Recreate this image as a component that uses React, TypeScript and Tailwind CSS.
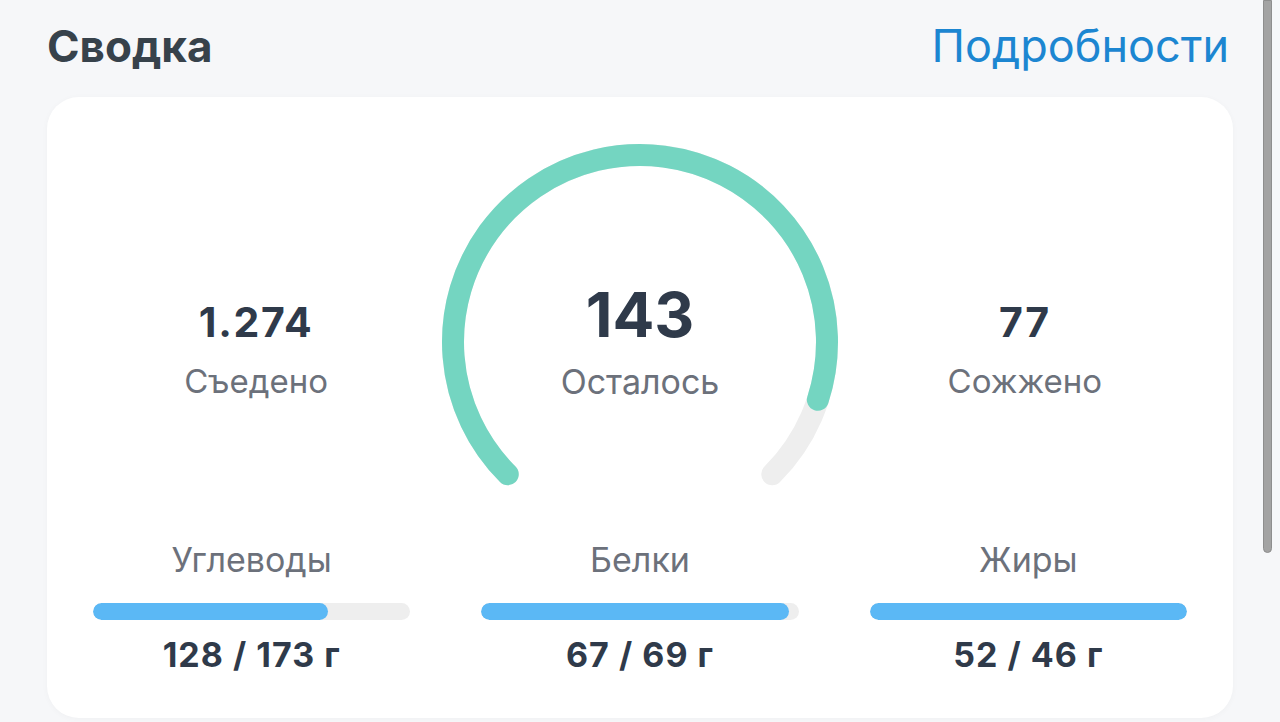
import React from "react";

type Macro = {
  label: string;
  eaten: number;
  goal: number;
};

const macros: Macro[] = [
  { label: "Углеводы", eaten: 128, goal: 173 },
  { label: "Белки", eaten: 67, goal: 69 },
  { label: "Жиры", eaten: 52, goal: 46 },
];

const font = { fontFamily: "Inter, 'Noto Sans', sans-serif" };

// point on the gauge circle; angle in degrees, 0 = right, counter-clockwise positive
function polar(cx: number, cy: number, r: number, deg: number) {
  const rad = (deg * Math.PI) / 180;
  return { x: cx + r * Math.cos(rad), y: cy - r * Math.sin(rad) };
}

function arcPath(cx: number, cy: number, r: number, from: number, sweep: number) {
  const a = polar(cx, cy, r, from);
  const b = polar(cx, cy, r, from - sweep);
  const large = sweep > 180 ? 1 : 0;
  return `M ${a.x} ${a.y} A ${r} ${r} 0 ${large} 1 ${b.x} ${b.y}`;
}

function Gauge({ progress }: { progress: number }) {
  const cx = 200;
  const cy = 200;
  const r = 187;
  const total = 270;
  return (
    <svg className="absolute inset-0" width={400} height={345} viewBox="0 0 400 345">
      <path d={arcPath(cx, cy, r, 225, total)} fill="none" stroke="#eeeeee" strokeWidth={22} strokeLinecap="round" />
      <path
        d={arcPath(cx, cy, r, 225, total * progress)}
        fill="none"
        stroke="#74d5c1"
        strokeWidth={22}
        strokeLinecap="round"
      />
    </svg>
  );
}

function Stat({ value, label, className }: { value: string; label: string; className?: string }) {
  return (
    <div className={`flex flex-col items-center pt-[156px] ${className ?? ""}`}>
      <div className="text-[41px] leading-[48px] font-bold tracking-[0.04em] text-[#2f3a4a]">{value}</div>
      <div className="mt-[15px] text-[33px] leading-[40px] text-[#6c717b]">{label}</div>
    </div>
  );
}

function MacroBar({ label, eaten, goal }: Macro) {
  const pct = Math.min(eaten / goal, 1) * 100;
  return (
    <div className="flex flex-col items-center">
      <div className="text-[34px] leading-[40px] text-[#6c717b]">{label}</div>
      <div className="mt-[23px] h-[17px] w-full rounded-full bg-[#eeeeee] overflow-hidden">
        <div className="h-full rounded-full bg-[#5bb8f5]" style={{ width: `${pct}%` }} />
      </div>
      <div className="mt-[15px] text-[34px] leading-[40px] font-bold tracking-[0.03em] text-[#2f3a4a]">
        {eaten} / {goal} г
      </div>
    </div>
  );
}

export default function App() {
  return (
    <div className="relative min-h-screen bg-[#f6f7f9] px-[47px] pt-[18px] pb-[4px]" style={font}>
      <div className="flex items-center justify-between pr-[4px]">
        <h1 className="text-[44px] leading-[56px] font-bold text-[#37424b]">Сводка</h1>
        <a className="text-[45px] leading-[56px] text-[#1c86d1]">Подробности</a>
      </div>

      <div className="mt-[23px] rounded-[32px] bg-white px-[46px] pt-[45px] pb-[43px] shadow-[0_1px_6px_rgba(0,0,0,0.03)]">
        <div className="grid grid-cols-3 gap-x-[71px]">
          <Stat value="1.274" label="Съедено" className="pl-[9px]" />
          <div className="flex justify-center">
            <div className="relative h-[345px] w-[400px] shrink-0">
              <Gauge progress={0.9} />
              <div className="relative flex flex-col items-center pt-[142px]">
                <div className="text-[62px] leading-[62px] font-bold text-[#2f3a4a]">143</div>
                <div className="mt-[16px] text-[34px] leading-[40px] text-[#6c717b]">Осталось</div>
              </div>
            </div>
          </div>
          <Stat value="77" label="Сожжено" className="pr-[7px]" />
        </div>

        <div className="mt-[53px] grid grid-cols-3 gap-x-[71px]">
          {macros.map((m) => (
            <MacroBar key={m.label} {...m} />
          ))}
        </div>
      </div>

      {/* overlay scrollbar */}
      <div className="absolute right-[8px] top-0 h-[553px] w-[9px] rounded-b-full border border-[#8e8e8e] bg-[#a3a3a3]" />
    </div>
  );
}
